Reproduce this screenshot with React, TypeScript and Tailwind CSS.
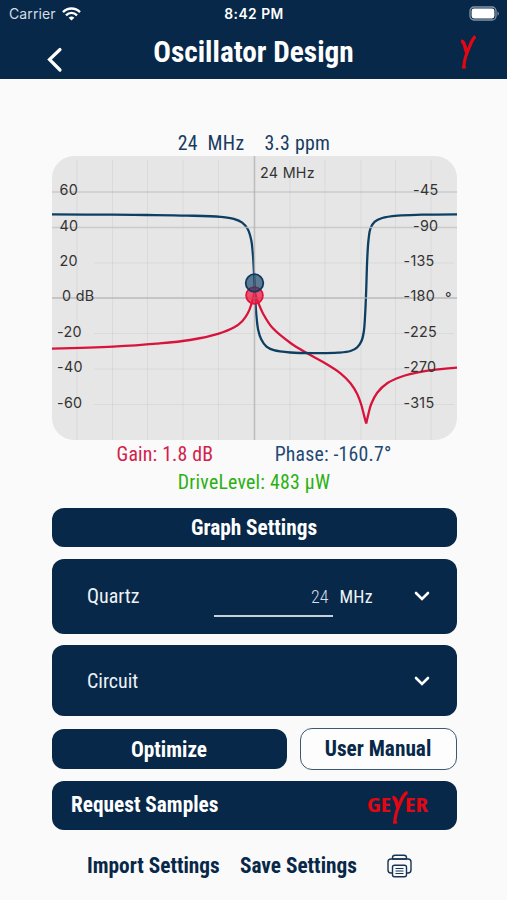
type Point = [number, number]

const PHASE: Point[] = [
  [0, 58.4], [60, 58.7], [95, 59], [135, 59.6], [168.5, 60.9], [181.8, 62.9], [190.2, 66.7], [195.8, 73.3],
  [199.2, 84], [200.8, 97.3], [202, 117], [203.5, 147], [204.5, 160.7], [206.2, 174], [209.2, 183.3],
  [214.5, 190.7], [221.8, 194.2], [238.5, 196.5], [263, 197.1], [286, 196.7], [298.5, 195], [305.2, 191.3], [309.5, 185],
  [311.8, 175.7], [313.2, 157.3], [314.2, 134], [315.2, 104], [316.5, 84], [318.5, 72.3], [322.8, 65.7],
  [330.2, 62], [346, 59.6], [370, 58.7], [405, 58.3],
]

const GAIN_LEFT: Point[] = [
  [0, 192.7], [61, 190.7], [104.7, 187.7], [138, 184], [166, 177.9], [181.8, 171.6], [190.2, 165.2], [195.8, 157.3],
  [199.5, 148], [202.5, 136],
]

const GAIN_RIGHT: Point[] = [
  [202.5, 136], [206.8, 148], [211.8, 159], [220.2, 171.6], [238.5, 187], [254.7, 197], [271, 206], [288.5, 217.3],
  [298.5, 227.2], [305.2, 238], [309.2, 248.5], [311.8, 258.5], [314.2, 267.5],
]

const GAIN_TAIL: Point[] = [
  [314.2, 267.5], [316.3, 258.5], [319.2, 248], [325.2, 236.7], [335.2, 227.3], [348.5, 221], [370, 215.7], [405, 211.7],
]

const GRID_X = [25, 60.5, 95.5, 131, 166.5, 238, 273, 309, 343.5, 379]

const GRID_Y = [
  { y: 36, gain: '60', phase: '-45', gx: 7.5, px: 361, strong: true },
  { y: 71.5, gain: '40', phase: '-90', gx: 7.5, px: 361, strong: true },
  { y: 107, gain: '20', phase: '-135', gx: 7.5, px: 351.5, strong: false },
  { y: 142, gain: '0 dB', phase: '-180', gx: 10, px: 351.5, strong: true },
  { y: 177.5, gain: '-20', phase: '-225', gx: 5, px: 351.5, strong: false },
  { y: 213, gain: '-40', phase: '-270', gx: 5, px: 351.5, strong: false },
  { y: 248.5, gain: '-60', phase: '-315', gx: 5, px: 351.5, strong: false },
]

// handle leaving b on the way to c, for a centripetal Catmull-Rom spline
function handle(a: Point, b: Point, c: Point) {
  const d1 = Math.sqrt(Math.hypot(b[0] - a[0], b[1] - a[1]))
  const d2 = Math.sqrt(Math.hypot(c[0] - b[0], c[1] - b[1]))
  if (d1 === 0) return b
  const at = (i: 0 | 1) =>
    (d1 * d1 * c[i] - d2 * d2 * a[i] + (2 * d1 * d1 + 3 * d1 * d2 + d2 * d2) * b[i]) / (3 * d1 * (d1 + d2))
  return [at(0), at(1)]
}

function curve(pts: Point[]) {
  let d = `M${pts[0].join(' ')}`
  for (let i = 0; i < pts.length - 1; i++) {
    const p1 = pts[i]
    const p2 = pts[i + 1]
    const out = handle(pts[i - 1] ?? p1, p1, p2)
    const back = handle(pts[i + 2] ?? p2, p2, p1)
    d += ` C${out.join(' ')} ${back.join(' ')} ${p2.join(' ')}`
  }
  return d
}

function Chart() {
  return (
    <svg width="405" height="284" viewBox="0 0 405 284" className="block overflow-hidden rounded-[22px] bg-[#e6e6e6]">
      <g fill="none" strokeWidth="2.3" strokeLinejoin="round">
        <path d={curve(GAIN_LEFT)} stroke="#d9133b" />
        <path d={curve(GAIN_RIGHT)} stroke="#d9133b" />
        <path d={curve(GAIN_TAIL)} stroke="#d9133b" />
        <path d={curve(PHASE)} stroke="#0d3f63" />
      </g>
      <g stroke="#000" strokeOpacity="0.05" strokeWidth="1">
        {GRID_X.map(x => <line key={x} x1={x} x2={x} y1="4" y2="284" />)}
        {GRID_Y.filter(g => !g.strong).map(g => <line key={g.y} x1="42" x2="402" y1={g.y} y2={g.y} />)}
      </g>
      <g stroke="#c4c4c4" strokeOpacity="0.8" strokeWidth="1.4">
        {GRID_Y.filter(g => g.strong && g.y !== 142).map(g => <line key={g.y} x1="0" x2="405" y1={g.y} y2={g.y} />)}
        <line x1="0" x2="405" y1="142" y2="142" stroke="#b0b0b0" />
      </g>
      <line x1="202.5" x2="202.5" y1="0" y2="284" stroke="#b4b4b4" strokeOpacity="0.8" strokeWidth="1.6" />
      <g className="font-['Inter',sans-serif] text-[14.3px]" fill="#333333" letterSpacing="0.3">
        {GRID_Y.map(g => (
          <g key={g.y}>
            <text x={g.gx} y={g.y + 3.3}>{g.gain}</text>
            <text x={g.px} y={g.y + 3.3}>{g.phase}</text>
          </g>
        ))}
        <text x="393" y="147">°</text>
        <text x="208" y="21.5">24 MHz</text>
      </g>
      <circle cx="202.5" cy="139.5" r="8.4" fill="#f01c45" fillOpacity="0.75" stroke="#e0153d" strokeWidth="1.8" />
      <circle cx="202.5" cy="127" r="8.8" fill="#123f66" fillOpacity="0.65" stroke="#0d3a60" strokeWidth="1.8" />
    </svg>
  )
}

function Chevron() {
  return (
    <svg width="16" height="10" viewBox="0 0 16 10" fill="none" stroke="#fff" strokeWidth="2.6" strokeLinecap="round">
      <path d="M2 2 8 8 14 2" />
    </svg>
  )
}

function StatusBar() {
  return (
    <div className="flex h-[27px] items-center justify-between pr-[7px] pl-[9px] font-['Inter',sans-serif] text-[14px] text-white">
      <div className="flex w-[120px] items-center gap-[6px] text-[#d5dde6]">
        <span className="tracking-[0.1px]">Carrier</span>
        <svg width="19" height="14" viewBox="0 0 19 14" fill="none" stroke="#fff" strokeWidth="2.4">
          <path d="M1 5.2C5.8.3 13.2.3 18 5.2" />
          <path d="M4 8.3c3.2-3.2 7.8-3.2 11 0" />
          <path d="M6.6 10.7c1.8-1.5 4-1.5 5.8 0L9.5 13.6Z" fill="#fff" stroke="none" />
        </svg>
      </div>
      <span className="pt-px text-[13.8px] font-semibold tracking-[0.5px]">8:42 PM</span>
      <div className="flex w-[121px] justify-end">
        <svg width="31" height="15" viewBox="0 0 31 15">
          <rect x="1" y="1" width="26" height="13" rx="4" fill="none" stroke="#8394a6" strokeWidth="1.3" />
          <rect x="2.6" y="2.6" width="22.8" height="9.8" rx="2.4" fill="#fff" />
          <path d="M28.5 5.2c1.8.8 1.8 3.8 0 4.6Z" fill="#8394a6" />
        </svg>
      </div>
    </div>
  )
}

export default function App() {
  return (
    <div className="h-[900px] w-[507px] overflow-hidden bg-[#fafafa] font-['Roboto_Condensed','Roboto',sans-serif] text-[#072848] [font-stretch:75%]">
      <header className="h-[79px] bg-[#072848]">
        <StatusBar />
        <div className="flex h-[52px] items-start justify-between pr-[30px] pl-[46px] text-white">
          <svg width="60" height="46" viewBox="0 0 60 46" fill="none" stroke="#fff" strokeWidth="3.2" strokeLinecap="round">
            <path d="M14 22.5 3.5 32.5 14 43" />
          </svg>
          <h1 className="text-[29.3px] leading-[51px] font-bold whitespace-nowrap">Oscillator Design</h1>
          <div className="flex w-[76px] justify-end">
            <svg width="18" height="46" viewBox="0 0 18 46" fill="none" stroke="#e30613">
              <path d="M2 14.3C5 14 5.8 19 7.800 26" strokeWidth="3.6" />
              <path d="M16.5 9.5C13 11.5 11 18.5 7.6 27 5.6 32.500 4.8 36 4.9 40.500" strokeWidth="3.2" />
              <path d="M3 40.3h3.800" strokeWidth="2.5" />
            </svg>
          </div>
        </div>
      </header>

      <main className="flex flex-col pt-[51px] pr-[50.5px] pl-[51.5px]">
        <div className="flex h-[26px] items-center justify-center gap-[20px] pt-px text-[19.8px] tracking-[0.3px] text-[#173c62]">
          <span className="whitespace-pre">24  MHz</span>
          <span>3.3 ppm</span>
        </div>

        <Chart />

        <div className="flex h-[28px] items-center pt-px pr-[65px] pl-[65px] text-[19.8px] tracking-[0.2px]">
          <span className="flex-1 text-[#d3204a]">Gain: 1.8 dB</span>
          <span className="text-[#1f4a73]">Phase: -160.7°</span>
        </div>
        <div className="h-[28px] text-center text-[19.8px] leading-[29px] tracking-[0.25px] text-[#2bb012]">DriveLevel: 483 µW</div>

        <button className="mt-[12px] h-[39px] rounded-[12px] bg-[#072848] pt-px text-[21.3px] font-bold text-white">Graph Settings</button>

        <section className="mt-[12px] flex h-[74.5px] items-center rounded-[12px] bg-[#072848] pr-[27px] pl-[35.5px] text-[20px] text-[#eef2f6]">
          <span className="flex-1">Quartz</span>
          <div className="h-[41.5px] w-[119px] border-b-2 border-[#c5d0db] pr-[4px] text-right text-[18px] leading-[42px] font-light text-[#d5dde6]">24</div>
          <span className="ml-[7px] w-[74px] text-[18px] tracking-[0.2px]">MHz</span>
          <Chevron />
        </section>

        <section className="mt-[11.5px] flex h-[71px] items-center rounded-[12px] bg-[#072848] pr-[27px] pl-[35.5px] text-[20px] text-[#eef2f6]">
          <span className="flex-1">Circuit</span>
          <Chevron />
        </section>

        <div className="mt-[12px] flex h-[42px] items-center gap-[13px]">
          <button className="h-[40px] w-[235px] rounded-[12px] bg-[#072848] pt-px text-[21.3px] font-bold text-white">Optimize</button>
          <button className="h-[42px] flex-1 rounded-[12px] border border-[#3d5874] bg-[#fdfdfd] text-[21.3px] font-bold">User Manual</button>
        </div>

        <button className="mt-[10.5px] flex h-[49px] items-center justify-between rounded-[12px] bg-[#072848] pr-[27px] pl-[19.5px] text-[21.3px] font-bold text-white">
          <span>Request Samples</span>
          <svg width="63" height="42" viewBox="0 0 63 42" fill="none" stroke="#e30613">
            <g className="font-['Open_Sans',sans-serif] text-[20px] font-bold" fill="#e30613" stroke="none">
              <text x="0" y="28" textLength="24" lengthAdjust="spacingAndGlyphs">GE</text>
              <text x="38" y="28" textLength="23" lengthAdjust="spacingAndGlyphs">ER</text>
            </g>
            <path d="M25.5 13.8c3.500-.5 3.800 4 5.500 10.500" strokeWidth="3.8" />
            <path d="M40.5 8.200C36.500 9.500 34.5 15.5 30.8 24.5 28.8 30 27.8 34 27.9 38.500" strokeWidth="3.2" />
            <path d="M26 38.5h4.200" strokeWidth="2.4" />
          </svg>
        </button>

        <div className="mt-[15.5px] flex h-[42px] items-center pl-[35.5px] text-[21.3px] font-bold">
          <span className="w-[153px]">Import Settings</span>
          <span className="w-[147px]">Save Settings</span>
          <svg width="25" height="24" viewBox="0 0 25 24" fill="none" stroke="#173554" strokeWidth="1.4" strokeLinejoin="round">
            <path d="M5.5 5V3.5Q5.5 1.2 8 1.2h9q2.5 0 2.5 2.3V5Z" />
            <path d="M5.5 19H4Q1 19 1 16V8q0-3 3-3h17q3 0 3 3v8q0 3-3 3h-1.5" />
            <rect x="5.5" y="11.2" width="14" height="11.6" rx="2" />
            <path d="M8.5 14.5h8M8.5 17h8M8.5 19.5h8" strokeWidth="1.1" />
          </svg>
        </div>
      </main>
    </div>
  )
}
